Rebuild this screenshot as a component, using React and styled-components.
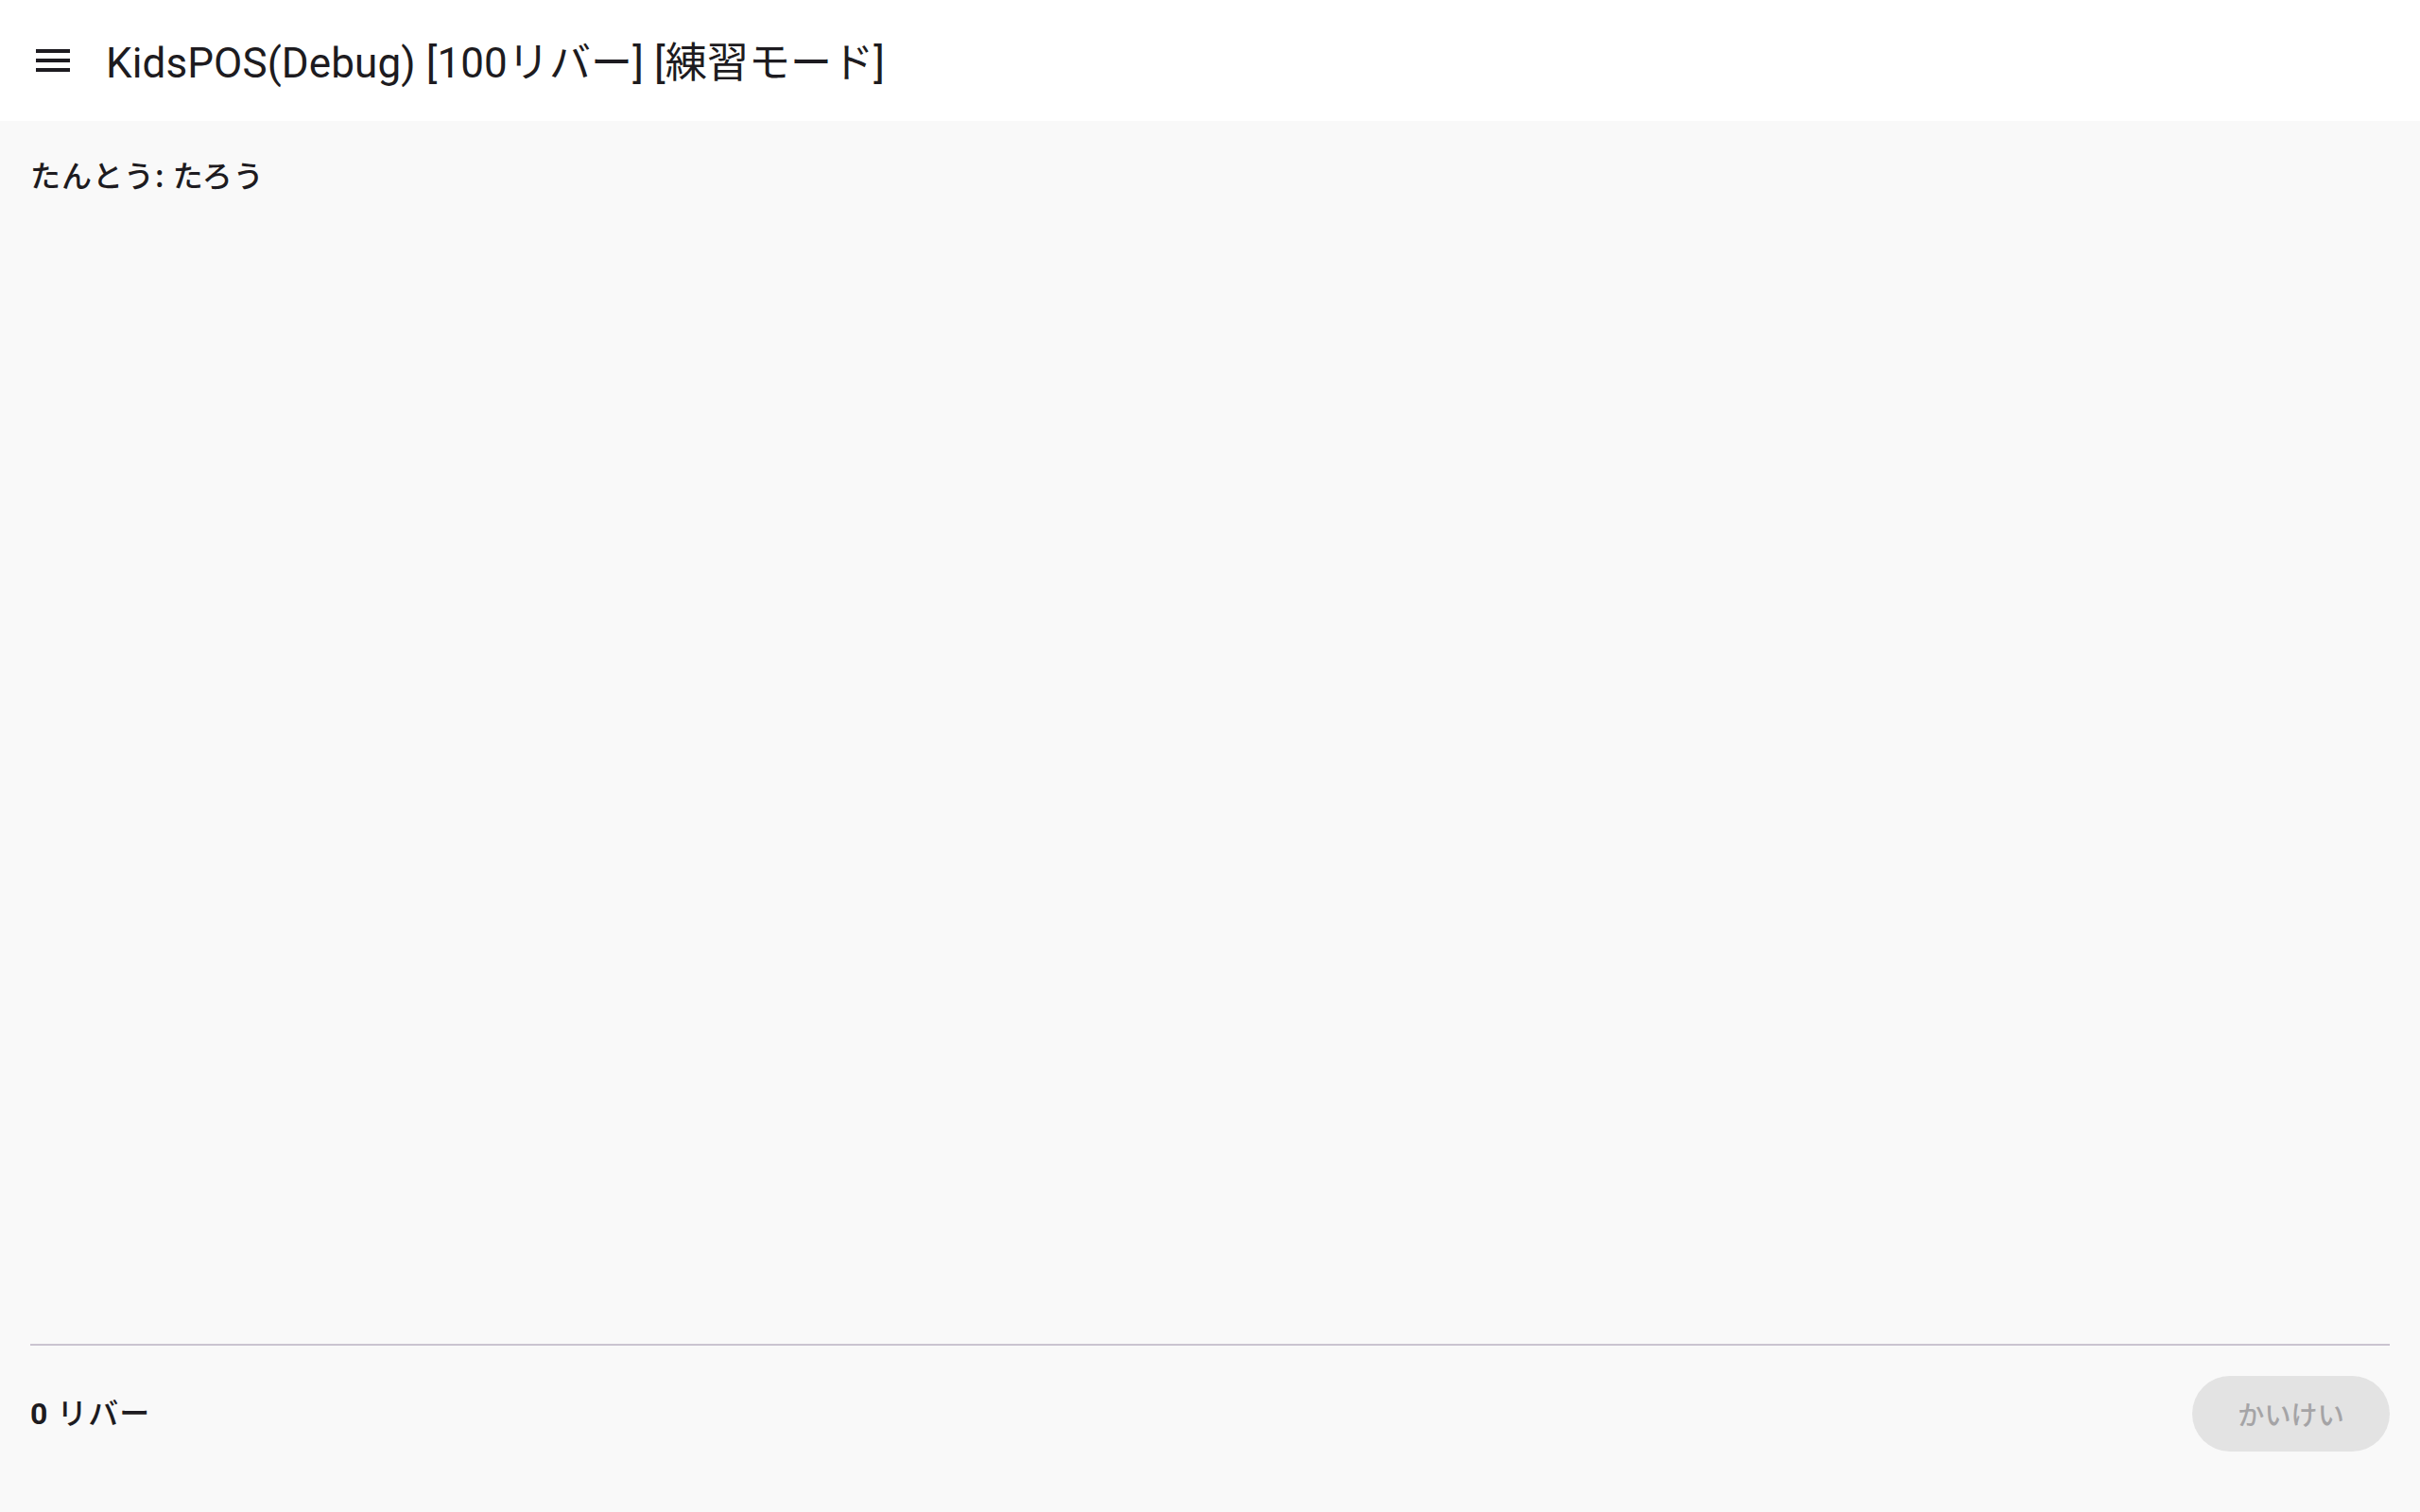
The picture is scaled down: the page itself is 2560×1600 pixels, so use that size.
import React from "react";
import styled, { createGlobalStyle } from "styled-components";

const GlobalStyle = createGlobalStyle`
  * {
    box-sizing: border-box;
  }
  html, body {
    margin: 0;
    padding: 0;
    background: #f9f9f9;
  }
  body {
    font-family: Roboto, "Noto Sans CJK JP", sans-serif;
    color: #1d1b20;
  }
`;

function MenuIcon() {
  return (
    <svg width="48" height="48" viewBox="0 0 24 24" fill="currentColor">
      <path d="M3 18h18v-2H3v2zm0-5h18v-2H3v2zm0-7v2h18V6H3z" />
    </svg>
  );
}

export default function App() {
  const staff = "たろう";
  const total = 0;

  return (
    <>
      <GlobalStyle />
      <Page>
        <TopBar>
          <NavButton aria-label="menu">
            <MenuIcon />
          </NavButton>
          <Title>KidsPOS(Debug) [100リバー] [練習モード]</Title>
        </TopBar>

        <Content>
          <StaffLabel>たんとう: {staff}</StaffLabel>
          <Spacer />
          <Divider />
          <TotalRow>
            <Total>
              <strong>{total}</strong> リバー
            </Total>
            <CheckoutButton disabled>かいけい</CheckoutButton>
          </TotalRow>
        </Content>
      </Page>
    </>
  );
}

const Page = styled.div`
  display: flex;
  flex-direction: column;
  height: 100vh;
  background: #f9f9f9;
`;

const TopBar = styled.header`
  display: flex;
  align-items: center;
  height: 128px;
  padding-left: 32px;
  background: #ffffff;
`;

const NavButton = styled.button`
  display: flex;
  align-items: center;
  justify-content: center;
  width: 48px;
  height: 48px;
  padding: 0;
  border: none;
  background: transparent;
  color: #1d1b20;
`;

const Title = styled.h1`
  margin: 6px 0 0 32px;
  font-family: Roboto, "Noto Sans CJK JP", sans-serif;
  font-size: 44px;
  font-weight: 400;
  line-height: 56px;
  letter-spacing: 0.1px;
  color: #1d1b20;
  white-space: nowrap;
`;

const Content = styled.main`
  flex: 1;
  display: flex;
  flex-direction: column;
  padding: 32px;
`;

const StaffLabel = styled.p`
  margin: 0;
  font-family: "Noto Sans CJK JP", Roboto, sans-serif;
  font-size: 32px;
  font-weight: 500;
  line-height: 48px;
  letter-spacing: 1px;
  color: #1d1b20;
`;

const Spacer = styled.div`
  flex: 1;
`;

const Divider = styled.hr`
  margin: 0;
  height: 2px;
  border: none;
  background: #cac4d0;
`;

const TotalRow = styled.div`
  display: flex;
  align-items: center;
  justify-content: space-between;
  padding: 32px 0;
`;

const Total = styled.p`
  margin: 0;
  font-family: Roboto, "Noto Sans CJK JP", sans-serif;
  font-size: 32px;
  font-weight: 500;
  line-height: 48px;
  letter-spacing: 1px;
  color: #1d1b20;
  strong {
    font-weight: 700;
  }
`;

const CheckoutButton = styled.button`
  height: 80px;
  padding: 0 48px;
  border: none;
  border-radius: 40px;
  background: #e3e3e3;
  color: #a5a4a6;
  font-family: "Noto Sans CJK JP", Roboto, sans-serif;
  font-size: 28px;
  font-weight: 500;
  line-height: 40px;
  letter-spacing: 0.2px;
`;
